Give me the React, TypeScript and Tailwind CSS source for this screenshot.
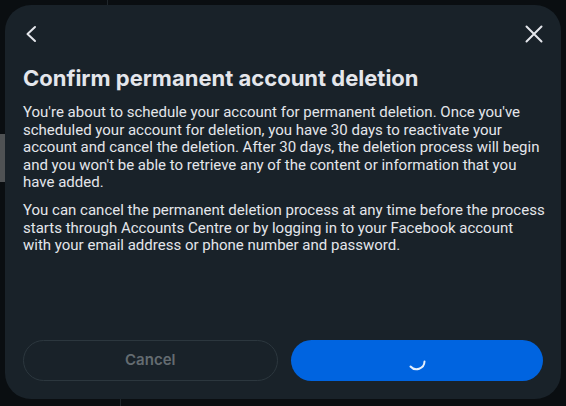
const App = () => {
  return (
    <div className="relative h-[406px] w-[566px] overflow-hidden bg-[#0a0e11] font-['Inter',sans-serif]">
      {/* background bits peeking behind the dialog */}
      <div className="absolute left-[107px] top-0 h-[6px] w-px bg-[#1f262b]" />
      <div className="absolute left-[120px] bottom-0 h-[7px] w-px bg-[#1f262b]" />
      <div className="absolute left-0 top-[134px] h-[48px] w-[5px] bg-[#4f5254]" />

      <div className="absolute left-[5px] top-[5px] flex h-[394px] w-[556px] flex-col rounded-[26px] bg-[#192229] px-[18px] pb-[18px] pt-[20px]">
        <div className="flex h-[18px] items-center justify-between">
          <svg width="14" height="18" viewBox="0 0 14 18" className="ml-[1px] text-[#e4e6eb]">
            <path d="M11 2 L3.5 9 L11 16" fill="none" stroke="currentColor" strokeWidth="2" strokeLinecap="round" strokeLinejoin="round" />
          </svg>
          <svg width="20" height="20" viewBox="0 0 20 20" className="-mr-[1px] text-[#e4e6eb]">
            <path d="M2.5 2.5 L17.5 17.5 M17.5 2.5 L2.5 17.5" fill="none" stroke="currentColor" strokeWidth="2" strokeLinecap="round" />
          </svg>
        </div>

        <h1 className="mt-[21px] text-[22px] font-bold leading-[28px] text-[#e4e6eb]">
          Confirm permanent account deletion
        </h1>

        <div className="mt-[12px] space-y-[10px] whitespace-nowrap font-['Roboto',sans-serif] text-[15px] leading-[17.6px] text-[#e4e6eb]">
          <p>
            You're about to schedule your account for permanent deletion. Once you've
            <br />
            scheduled your account for deletion, you have 30 days to reactivate your
            <br />
            account and cancel the deletion. After 30 days, the deletion process will begin
            <br />
            and you won't be able to retrieve any of the content or information that you
            <br />
            have added.
          </p>
          <p>
            You can cancel the permanent deletion process at any time before the process
            <br />
            starts through Accounts Centre or by logging in to your Facebook account
            <br />
            with your email address or phone number and password.
          </p>
        </div>

        <div className="mt-auto flex gap-[13px]">
          <button className="h-[41px] flex-1 rounded-full border border-[#2c373e] text-[15px] font-semibold text-[#646c71]">
            Cancel
          </button>
          <button className="flex h-[41px] flex-1 items-center justify-center rounded-full bg-[#0064e0]">
            <svg width="22" height="22" viewBox="0 0 22 22" className="mt-[6px] ml-[3px]">
              <path d="M3.5 13.5 A8 8 0 0 0 17.5 8.5" fill="none" stroke="#ffffff" strokeWidth="2" strokeLinecap="round" opacity="0.9" />
            </svg>
          </button>
        </div>
      </div>
    </div>
  );
};

export default App;
